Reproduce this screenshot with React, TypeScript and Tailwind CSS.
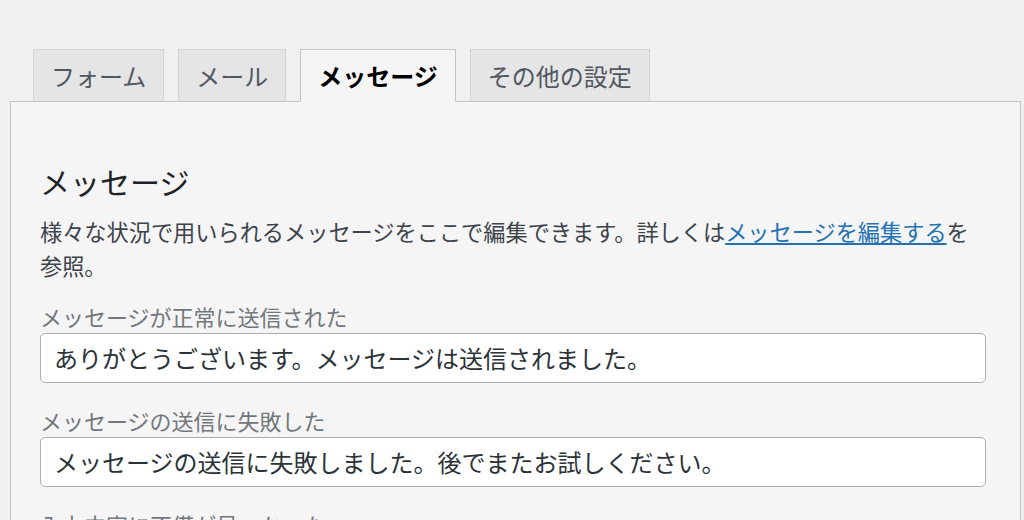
import React from "react";

const font = { fontFamily: '"Noto Sans CJK JP", "Noto Sans", sans-serif' };

function Tab({ label, active }: { label: string; active?: boolean }) {
  return active ? (
    <div className="h-[53px] px-[17px] flex items-center border border-[#c3c4c7] border-b-[#f5f5f5] bg-[#f5f5f5] text-[24px] font-bold text-black leading-none">
      {label}
    </div>
  ) : (
    <div className="h-[53px] px-[17px] flex items-center border border-[#d3d4d6] border-b-[#c3c4c7] bg-[#e5e5e6] text-[24px] text-[#50575e] leading-none">
      {label}
    </div>
  );
}

function Field({ label, value }: { label: string; value: string }) {
  return (
    <div className="flex flex-col">
      <label className="block text-[22px] leading-[34px] text-[#72777c]">{label}</label>
      <div className="h-[50px] flex items-center bg-white border border-[#acaeb1] rounded-[5px] pl-[13px] text-[24px] text-[#2c3338] leading-none">
        {value}
      </div>
    </div>
  );
}

export default function App() {
  return (
    <div style={font} className="w-[1024px] h-[520px] overflow-hidden bg-[#f0f0f1] pt-[49px]">
      <div className="flex items-end gap-[14px] pl-[33px] -mb-px relative z-10">
        <Tab label="フォーム" />
        <Tab label="メール" />
        <Tab label="メッセージ" active />
        <Tab label="その他の設定" />
      </div>
      <div className="ml-[10px] w-[1011px] border border-[#c3c4c7] bg-[#f5f5f5] pl-[29px] pr-[34px] pt-[59px] pb-[40px]">
        <h2 className="text-[30px] leading-[40px] text-[#1d2327] font-normal">メッセージ</h2>
        <p className="mt-[13px] text-[22.2px] leading-[34px] text-[#3c434a]">
          様々な状況で用いられるメッセージをここで編集できます。詳しくは
          <a href="#" className="text-[#2271b1] underline">メッセージを編集する</a>
          を参照。
        </p>
        <div className="mt-[17px] flex flex-col gap-[20px]">
          <Field label="メッセージが正常に送信された" value="ありがとうございます。メッセージは送信されました。" />
          <Field label="メッセージの送信に失敗した" value="メッセージの送信に失敗しました。後でまたお試しください。" />
          <Field label="入力内容に不備が見つかった" value="入力内容に問題があります。確認して再度お試しください。" />
        </div>
      </div>
    </div>
  );
}
